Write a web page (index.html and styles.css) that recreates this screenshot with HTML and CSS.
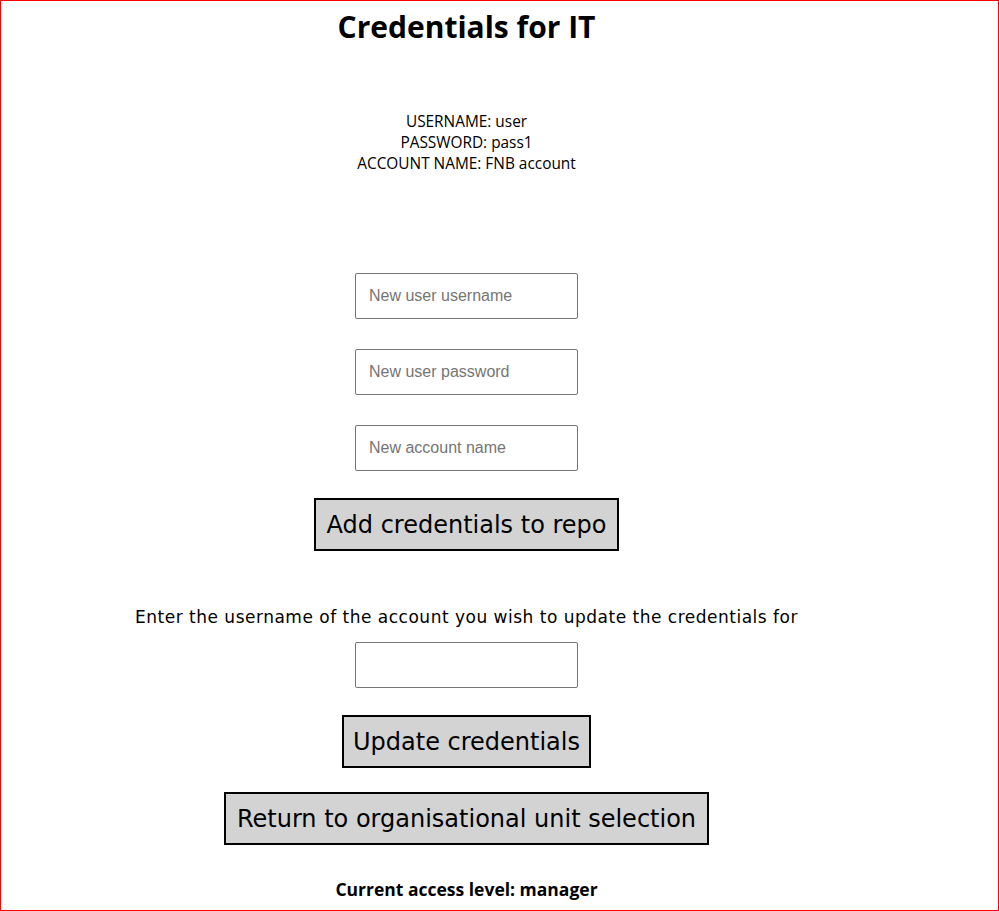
FILE: index.html
```html
<!DOCTYPE html>
<html>
<head>
<meta charset="utf-8">
<link rel="stylesheet" href="styles.css">
</head>
<body>
<div class="frame">
  <main class="page">
    <h1 class="title">Credentials for IT</h1>
    <div class="info">
      <div>USERNAME: user</div>
      <div>PASSWORD: pass1</div>
      <div>ACCOUNT NAME: FNB account</div>
    </div>
    <form class="add-form">
      <input class="field" type="text" placeholder="New user username">
      <input class="field" type="text" placeholder="New user password">
      <input class="field" type="text" placeholder="New account name">
      <button class="btn btn-add" type="button">Add credentials to repo</button>
    </form>
    <p class="prompt">Enter the username of the account you wish to update the credentials for</p>
    <input class="field field-update" type="text">
    <button class="btn btn-update" type="button">Update credentials</button>
    <button class="btn btn-return" type="button">Return to organisational unit selection</button>
    <p class="access">Current access level: manager</p>
  </main>
</div>
</body>
</html>
```

FILE: styles.css
```css
html, body {
  margin: 0;
  padding: 0;
  height: 100%;
}
.frame {
  box-sizing: border-box;
  height: 911px;
  width: 999px;
  border: 1px solid #ff0000;
  overflow: hidden;
  background: #ffffff;
}
.page {
  width: 931px;
  display: flex;
  flex-direction: column;
  align-items: center;
  font-family: "Open Sans", "Noto Sans", sans-serif;
  color: #000;
}
.title {
  margin: 6px 0 0;
  font-size: 30px;
  line-height: 40px;
  font-weight: 700;
}
.info {
  margin-top: 64px;
  font-size: 15.4px;
  line-height: 21px;
  text-align: center;
}
.add-form {
  margin-top: 99px;
  display: flex;
  flex-direction: column;
  align-items: center;
}
.field {
  box-sizing: border-box;
  width: 223px;
  height: 46px;
  border: 1px solid #767676;
  border-radius: 2px;
  padding: 0 13px;
  font-family: "Liberation Sans", Arial, sans-serif;
  font-size: 16px;
  color: #000;
  background: #fff;
  margin: 0 0 30px;
}
.field::placeholder {
  color: #757575;
}
.btn {
  box-sizing: border-box;
  height: 53px;
  border: 2px solid #000;
  border-radius: 0;
  background: #d3d3d3;
  font-family: "DejaVu Sans", sans-serif;
  font-size: 24px;
  color: #000;
  padding: 0 8px;
}
.btn-add {
  margin-top: -3px;
  width: 305px;
}
.prompt {
  margin: 55px 0 0;
  font-family: "DejaVu Sans", sans-serif;
  font-size: 17px;
  letter-spacing: 0.5px;
  line-height: 22px;
}
.field-update {
  margin: 14px 0 0;
}
.btn-update {
  margin-top: 27px;
  width: 249px;
}
.btn-return {
  margin-top: 24px;
  width: 485px;
}
.access {
  margin: 32px 0 0;
  font-size: 17.5px;
  line-height: 24px;
  font-weight: 700;
}
```
